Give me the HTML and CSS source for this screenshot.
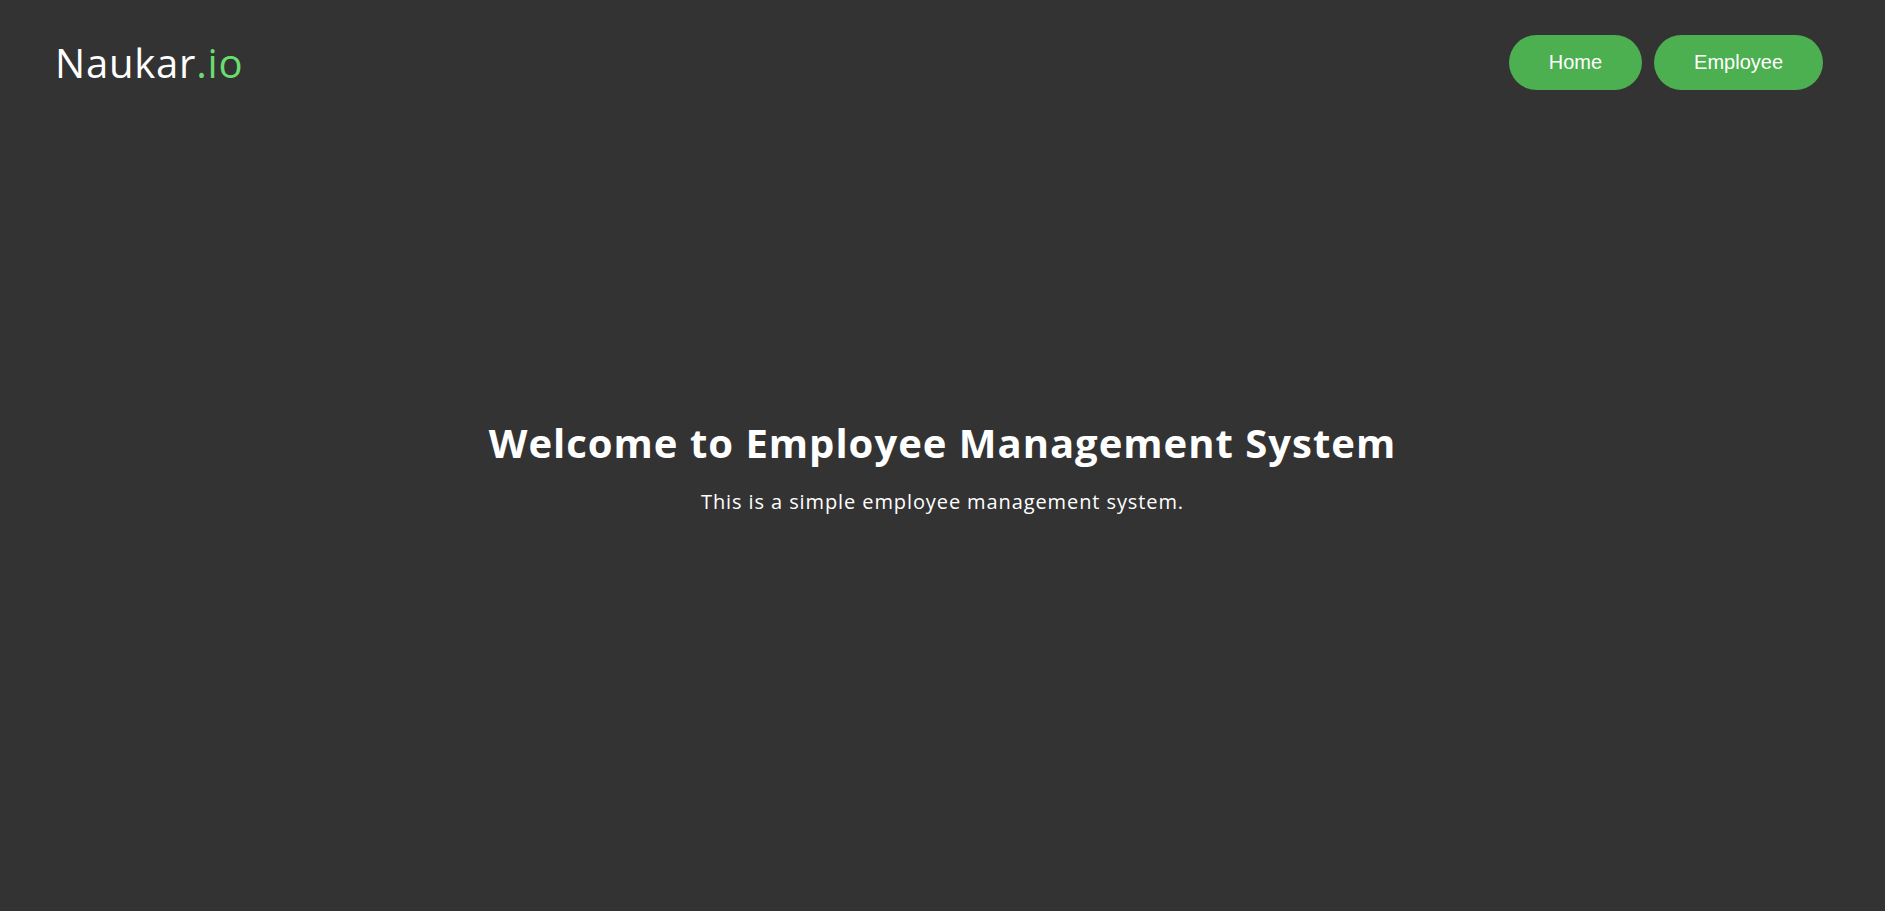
FILE: index.html
```html
<!DOCTYPE html>
<html lang="en">
<head>
<meta charset="utf-8">
<title>Naukar.io</title>
<link rel="stylesheet" href="styles.css">
</head>
<body>
<header class="topbar">
  <div class="logo">Naukar<span class="logo-accent">.io</span></div>
  <nav class="nav">
    <a class="nav-btn" href="#">Home</a>
    <a class="nav-btn" href="#">Employee</a>
  </nav>
</header>
<main class="hero">
  <h1 class="hero-title">Welcome to Employee Management System</h1>
  <p class="hero-text">This is a simple employee management system.</p>
</main>
</body>
</html>
```

FILE: styles.css
```css
html, body {
  margin: 0;
  padding: 0;
}
body {
  background: #333333;
  color: #ffffff;
  font-family: "Open Sans", "Noto Sans", sans-serif;
  min-height: 100vh;
}
.topbar {
  display: flex;
  align-items: center;
  justify-content: space-between;
  padding: 35px 62px 0 55px;
}
.logo {
  font-size: 40px;
  font-weight: 400;
  letter-spacing: 0.8px;
  color: #ffffff;
}
.logo-accent {
  color: #6bdc6f;
}
.nav {
  display: flex;
  gap: 12px;
}
.nav-btn {
  display: block;
  height: 55px;
  line-height: 55px;
  padding: 0 40px;
  box-sizing: border-box;
  border-radius: 28px;
  background: #4caf50;
  color: #ffffff;
  text-decoration: none;
  font-family: "Liberation Sans", Arial, sans-serif;
  font-size: 20px;
}
.hero {
  display: flex;
  flex-direction: column;
  align-items: center;
  padding-top: 326px;
}
.hero-title {
  margin: 0;
  font-size: 40px;
  font-weight: 700;
  line-height: 54px;
  letter-spacing: 1px;
}
.hero-text {
  margin: 18px 0 0;
  font-size: 20px;
  line-height: 27px;
  letter-spacing: 0.9px;
}
```
